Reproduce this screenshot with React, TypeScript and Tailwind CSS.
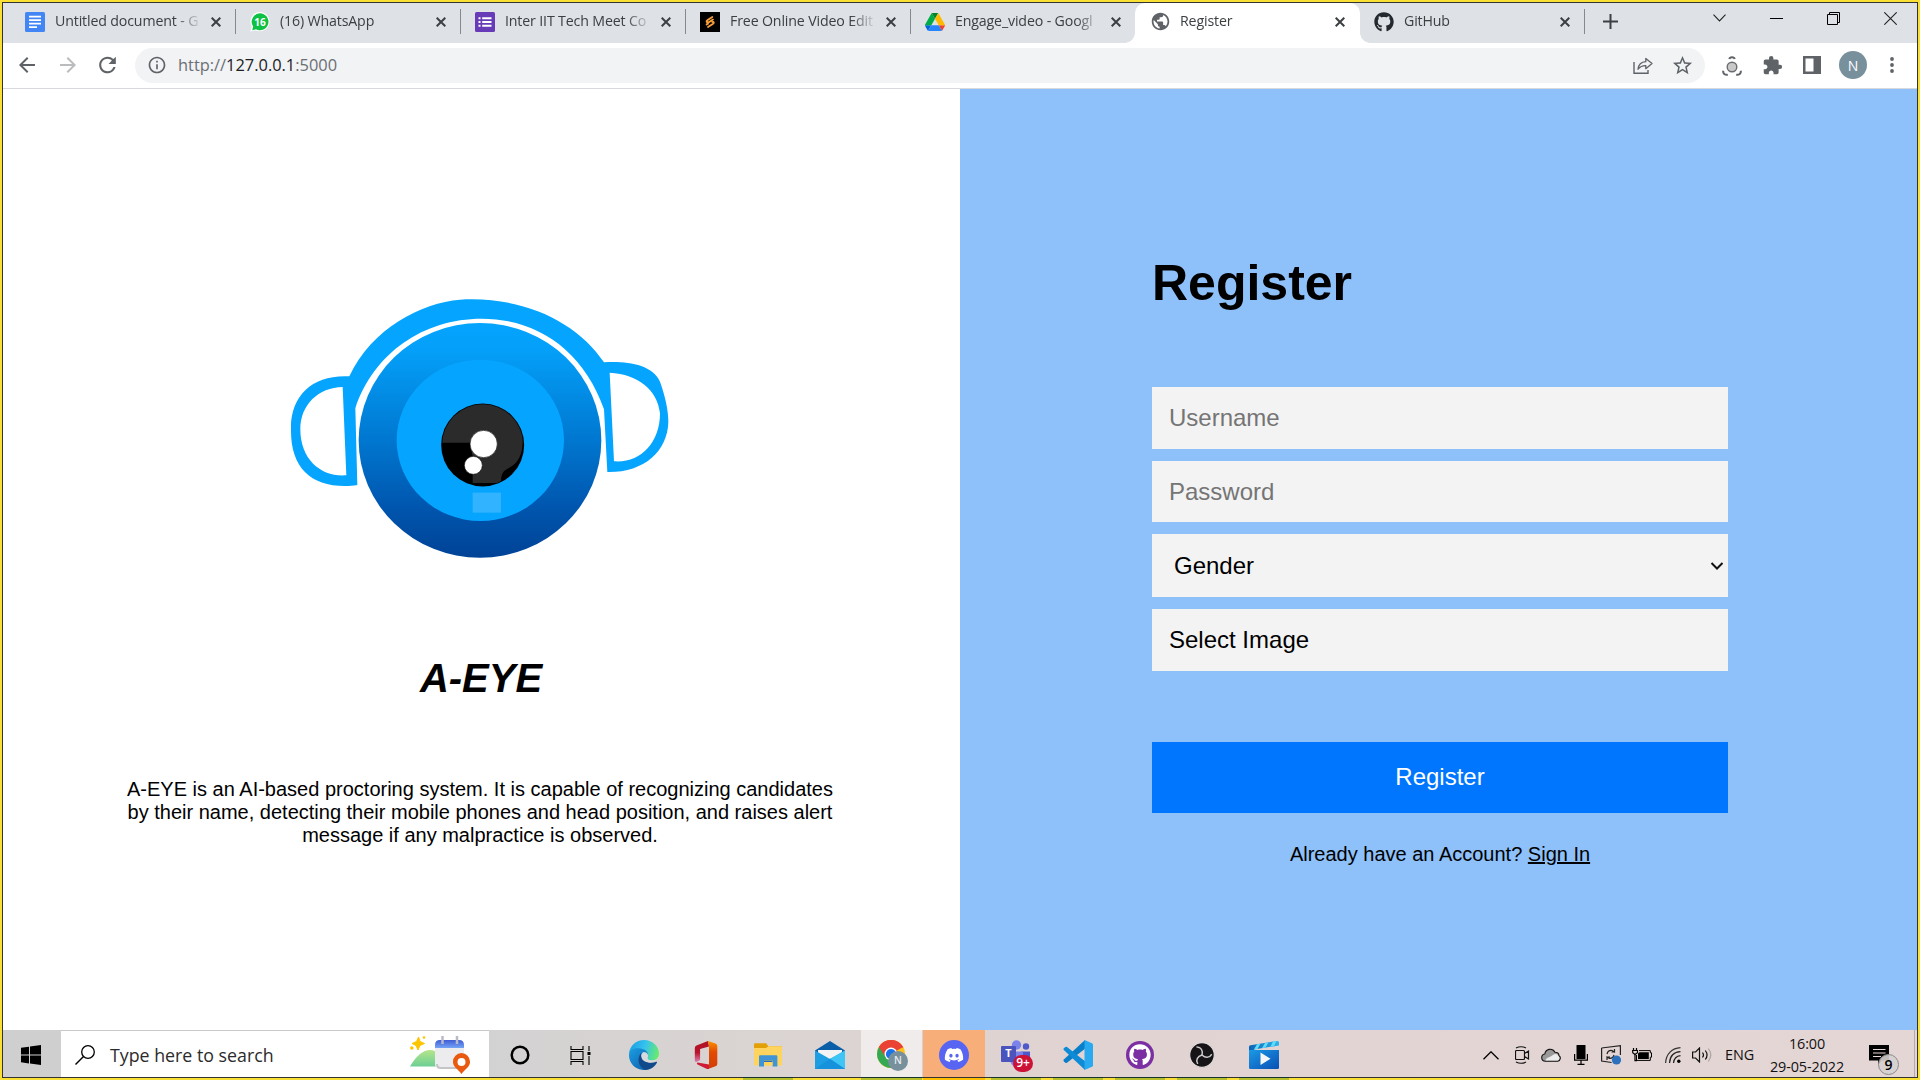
import React from "react";
import type { ReactNode } from "react";
import {
  MdArrowBack,
  MdArrowForward,
  MdRefresh,
  MdInfoOutline,
  MdStarBorder,
  MdExtension,
  MdPublic,
} from "react-icons/md";
import { FaGithub, FaDiscord } from "react-icons/fa";

/* ---------- Tab favicons ---------- */

const DocsIcon = () => (
  <svg viewBox="0 0 20 20" className="size-5">
    <rect width="20" height="20" rx="1.5" fill="#4285f4" />
    <path d="M4 4.700h12M4 8.200h12M4 11.700h12M4 15.200h8" stroke="#fff" strokeWidth="1.700" />
  </svg>
);

const WhatsAppIcon = () => (
  <div className="relative size-5">
    <svg viewBox="0 0 20 20" className="size-5">
      <path d="M10 0a9.600 9.600 0 1 1-4.400 18.200L0.400 19.600 1.800 14.600A9.600 9.600 0 0 1 10 0Z" fill="#fff" />
      <path d="M10 1.300a8.500 8.500 0 1 1-4 16L2.200 18.200 3.200 14.600A8.500 8.500 0 0 1 10 1.300Z" fill="#0cc143" />
    </svg>
    <span className="absolute inset-0 flex items-center justify-center text-[10px] font-bold leading-none text-white">16</span>
  </div>
);

const FormsIcon = () => (
  <svg viewBox="0 0 20 20" className="size-5">
    <rect width="20" height="20" rx="1.5" fill="#673ab7" />
    <path d="M7.200 6.200h9.300M7.200 10h9.300M7.200 13.800h9.300" stroke="#fff" strokeWidth="2" />
    <path d="M3.500 6.200h2M3.500 10h2M3.500 13.800h2" stroke="#fff" strokeWidth="2" />
  </svg>
);

const VideoEditIcon = () => (
  <svg viewBox="0 0 20 20" className="size-5">
    <rect width="20" height="20" fill="#000" />
    <path
      d="M12.300 5 7.300 8.200c-1.300.9-.8 2.600.8 1.900M13 7.600 7.300 11.200M12.300 10c1.600-.7 2 1 .8 1.800L8 15M6.600 12.600l1.400-.9"
      fill="none"
      stroke="#f9a13a"
      strokeWidth="1.800"
      strokeLinecap="round"
    />
  </svg>
);

const DriveIcon = () => (
  <svg viewBox="0 0 87.3 78" className="h-[18px] w-5">
    <path d="m6.6 66.85 3.85 6.65c.8 1.4 1.95 2.5 3.3 3.3l13.75-23.8h-27.5c0 1.55.4 3.1 1.2 4.5z" fill="#0066da" />
    <path d="m43.65 25-13.75-23.8c-1.35.8-2.5 1.9-3.3 3.3l-25.4 44a9.06 9.06 0 0 0 -1.2 4.5h27.5z" fill="#00ac47" />
    <path d="m73.55 76.8c1.35-.8 2.5-1.9 3.3-3.3l1.6-2.75 7.65-13.25c.8-1.4 1.2-2.95 1.2-4.5h-27.5l5.85 11.5z" fill="#ea4335" />
    <path d="m43.65 25 13.75-23.8c-1.35-.8-2.9-1.2-4.5-1.2h-18.5c-1.6 0-3.15.45-4.5 1.2z" fill="#00832d" />
    <path d="m59.8 53h-32.3l-13.75 23.8c1.35.8 2.9 1.2 4.5 1.2h50.8c1.6 0 3.15-.45 4.5-1.2z" fill="#2684fc" />
    <path d="m73.4 26.5-12.7-22c-.8-1.4-1.95-2.5-3.3-3.3l-13.75 23.8 16.15 28h27.45c0-1.55-.4-3.1-1.2-4.5z" fill="#ffba00" />
  </svg>
);

/* ---------- Browser chrome ---------- */

type TabInfo = { title: string; icon: ReactNode; active?: boolean; sep?: boolean };

const tabs: TabInfo[] = [
  { title: "Untitled document - G", icon: <DocsIcon />, sep: true },
  { title: "(16) WhatsApp", icon: <WhatsAppIcon />, sep: true },
  { title: "Inter IIT Tech Meet Co", icon: <FormsIcon />, sep: true },
  { title: "Free Online Video Edit", icon: <VideoEditIcon />, sep: true },
  { title: "Engage_video - Googl", icon: <DriveIcon /> },
  { title: "Register", icon: <MdPublic className="size-[21px] shrink-0 text-[#5f6368]" />, active: true },
  { title: "GitHub", icon: <FaGithub className="size-5 text-[#24292f]" />, sep: true },
];

const CloseX = () => (
  <svg viewBox="0 0 10 10" className="size-[10px] shrink-0">
    <path d="M0.700 0.700 9.300 9.300M9.300 0.700 0.700 9.300" stroke="#3c4043" strokeWidth="2" />
  </svg>
);

function Tab({ title, icon, active, sep }: TabInfo) {
  return (
    <div
      className={
        "relative flex h-10 w-[225px] shrink-0 items-center pb-[3px] pl-[15px] last:w-[224px] last:pl-[14px] " +
        (active ? "rounded-t-[10px] bg-white" : "")
      }
    >
      <div className="flex w-5 shrink-0 items-center justify-center">{icon}</div>
      <div className="ml-[10px] w-[147px] overflow-hidden whitespace-nowrap pb-[2px] text-[14.200px] tracking-[-0.150px] text-[#3c4043] [mask-image:linear-gradient(90deg,#000_82%,transparent_100%)]">
        {title}
      </div>
      <div className={active ? "ml-[8px] flex" : "ml-[9px] flex"}>
        <CloseX />
      </div>
      {sep && <span className="absolute right-[-1px] top-[6px] h-[25px] w-px bg-[#85888c]" />}
      {active && (
        <>
          <span className="absolute bottom-0 left-[-10px] size-[10px] bg-[radial-gradient(circle_at_0_0,transparent_9.5px,#fff_10px)]" />
          <span className="absolute bottom-0 right-[-10px] size-[10px] bg-[radial-gradient(circle_at_100%_0,transparent_9.5px,#fff_10px)]" />
        </>
      )}
    </div>
  );
}

function TabStrip() {
  return (
    <div className="flex h-10 bg-[#dee1e6] pl-[7px]">
      <div className="flex">
        {tabs.map((t) => (
          <Tab key={t.title} {...t} />
        ))}
      </div>
      <svg viewBox="0 0 15 15" className="ml-[19px] mt-[11px] size-[15px]">
        <path d="M7.500 0v15M0 7.500h15" stroke="#3c4043" strokeWidth="2" />
      </svg>
      <div className="ml-auto mr-[20px] mt-[8px] flex h-[14px] items-center gap-[44px]">
        <svg viewBox="0 0 13 8" className="h-2 w-[13px]">
          <path d="M0.500 0.700 6.500 6.900 12.500 0.700" fill="none" stroke="#222" strokeWidth="1.100" />
        </svg>
        <span className="h-px w-[13px] bg-black" />
        <svg viewBox="0 0 13 13" className="size-[13px]">
          <path d="M0.500 2.500h10v10h-10zM2.500 2V0.500h10v10H11" fill="none" stroke="#000" />
        </svg>
        <svg viewBox="0 0 13 13" className="size-[13px]">
          <path d="M0.300 0.300 12.700 12.700M12.700 0.300 0.300 12.700" stroke="#222" strokeWidth="1.100" />
        </svg>
      </div>
    </div>
  );
}

function Toolbar() {
  return (
    <div className="flex h-[46px] items-center border-b border-[#d8d9dc] bg-white pb-px text-[#5f6368]">
      <div className="ml-[12px] flex w-[24px] justify-center">
        <MdArrowBack className="size-6" />
      </div>
      <div className="ml-[17px] flex w-[24px] justify-center text-[#babcbe]">
        <MdArrowForward className="size-6" />
      </div>
      <div className="ml-[15px] flex w-[25px] justify-center">
        <MdRefresh className="size-[26px]" />
      </div>
      <div className="ml-[15px] flex h-[35px] w-[1570px] items-center rounded-full bg-[#f1f3f4] pl-[12px]">
        <MdInfoOutline className="size-5" />
        <div className="ml-[11px] whitespace-nowrap pt-px text-[16.400px] text-[#6b6f74]">
          http://<span className="text-[#202124]">127.0.0.1</span>:5000
        </div>
        <svg viewBox="0 0 20 18" className="ml-auto mt-[2px] h-[18px] w-5">
          <path d="M1 5v11.300h14V13" fill="none" stroke="#5f6368" strokeWidth="1.400" />
          <path d="M5 12.200C5.500 7.600 8 5 12.800 4.700V1.400l6.200 5.200-6.200 5.100V8.600C9.500 8.500 7 9.600 5 12.200Z" fill="none" stroke="#5f6368" strokeWidth="1.300" strokeLinejoin="round" />
        </svg>
        <MdStarBorder className="ml-[18px] mr-[11px] mt-px size-[23px]" />
      </div>
      <svg viewBox="0 0 20 20" className="ml-[17px] mt-px size-5">
        <circle cx="10" cy="11" r="4.800" fill="#c9c9c9" stroke="#6a6c6f" strokeWidth="1.400" />
        <path d="M7.300 3C7.800.6 12.200.6 12.700 3M1.300 14.800c-.6 2.700 1.500 4.400 4.500 4M18.700 14.800c.6 2.700-1.500 4.400-4.500 4" fill="none" stroke="#5f6368" strokeWidth="2" />
      </svg>
      <MdExtension className="ml-[20px] size-[21px]" />
      <svg viewBox="0 0 18 18" className="ml-[20px] size-[18px]">
        <path d="M0 0h18v18H0zM2.500 2.500v13h8v-13z" fill="#5f6368" fillRule="evenodd" />
      </svg>
      <div className="ml-[18px] flex size-7 items-center justify-center rounded-full bg-[#78909c] text-[14px] text-white">N</div>
      <svg viewBox="0 0 4 16" className="ml-[23px] h-4 w-1">
        <circle cx="2" cy="2" r="1.900" fill="#5f6368" />
        <circle cx="2" cy="8" r="1.900" fill="#5f6368" />
        <circle cx="2" cy="14" r="1.900" fill="#5f6368" />
      </svg>
    </div>
  );
}

/* ---------- Page ---------- */

const EyeLogo = () => (
  <svg viewBox="0 0 1260 900" className="h-[300px] w-[420px] shrink-0">
    <defs>
      <linearGradient id="eyeball" x1="0" y1="0" x2="0" y2="1">
        <stop offset="0" stopColor="#05a4ff" />
        <stop offset=".12" stopColor="#049ff8" />
        <stop offset=".5" stopColor="#0077d0" />
        <stop offset=".8" stopColor="#0054ac" />
        <stop offset="1" stopColor="#004397" />
      </linearGradient>
      <clipPath id="pupil">
        <circle cx="638" cy="495" r="122" />
      </clipPath>
    </defs>
    <path
      fill="#05a5ff"
      fillRule="evenodd"
      d="M238 289C305 145 455 68 570 59C760 48 920 125 1002 247C1070 243 1145 252 1170 305C1186 350 1195 390 1195 425C1193 515 1120 578 1012 576L1002 388C940 210 800 116 635 116C460 116 310 220 256 385L262 615C250 617 240 618 225 618C120 618 62 560 63 450C60 345 130 283 238 289ZM218 321C145 322 90 375 91 450C92 540 155 592 229 586ZM1019 278C1105 283 1163 330 1170 400C1170 490 1110 550 1032 544Z"
    />
    <ellipse cx="630" cy="481" rx="364" ry="352" fill="url(#eyeball)" />
    <ellipse cx="631" cy="481" rx="251" ry="242" fill="#05a5ff" />
    <circle cx="638" cy="495" r="124.500" fill="#000" />
    <path
      clipPath="url(#pupil)"
      fill="#2b2b2b"
      d="M514 370H758V488C756 525 745 548 718 563C698 572 693 582 693 609H608V530L600 488H514Z"
    />
    <circle cx="641" cy="492" r="41" fill="#fff" stroke="#111" strokeWidth="2" />
    <circle cx="610" cy="556" r="27" fill="#fff" stroke="#111" strokeWidth="2" />
    <rect x="608" y="638" width="85" height="60" fill="#31b3ff" />
  </svg>
);

const fieldClass =
  "block w-full bg-[#f3f3f3] px-[17px] text-[24px] text-black outline-none placeholder:text-[#757575] placeholder:opacity-100";

function RegisterPage() {
  return (
    <div className="flex h-[941px] font-['Liberation_Sans',Arial,sans-serif] text-black">
      <div className="flex w-[957px] flex-col items-center bg-white pr-[3px] pt-[191px]">
        <EyeLogo />
        <h2 className="mt-[75px] pl-[2px] text-[40px] font-bold italic leading-[46px]">A-EYE</h2>
        <p className="mt-[77px] w-[710px] text-center text-[20px] leading-[23px]">
          A-EYE is an AI-based proctoring system. It is capable of recognizing candidates by their name, detecting
          their mobile phones and head position, and raises alert message if any malpractice is observed.
        </p>
      </div>
      <div className="flex-1 bg-[#8ec0fa] pl-[192px] pt-[165px]">
        <div className="flex w-[576px] flex-col">
          <h1 className="text-[50px] font-bold leading-[58px]">Register</h1>
          <div className="mt-[75px] flex flex-col gap-3">
            <input className={fieldClass + " h-[62px]"} placeholder="Username" />
            <input className={fieldClass + " h-[61px]"} placeholder="Password" />
            <div className="flex h-[63px] items-center justify-between bg-[#f3f3f3] pl-[22px] pr-[4px] text-[24px]">
              Gender
              <svg viewBox="0 0 14 8" className="h-[8px] w-[14px]">
                <path d="M1.500 1 7 6.500 12.500 1" fill="none" stroke="#111" strokeWidth="2" />
              </svg>
            </div>
            <div className="flex h-[62px] items-center bg-[#f3f3f3] px-[17px] text-[24px]">Select Image</div>
          </div>
          <button className="mt-[71px] h-[71px] bg-[#0076ff] pb-px text-[24px] text-white">Register</button>
          <div className="mt-[30px] text-center text-[20px] leading-[23px]">
            Already have an Account? <a className="underline">Sign In</a>
          </div>
        </div>
      </div>
    </div>
  );
}

/* ---------- Taskbar icons ---------- */

const CortanaIcon = () => (
  <svg viewBox="0 0 20 20" className="size-5">
    <circle cx="10" cy="10" r="8.300" fill="none" stroke="#000" strokeWidth="2.500" />
  </svg>
);

const TaskViewIcon = () => (
  <svg viewBox="0 0 21 19" className="mr-[4px] h-[19px] w-[21px]">
    <path d="M1 0v3.500h12V0M1 19v-3.500h12V19M1 5.500h12v8H1zM19 0v5M19 10v9" fill="none" stroke="#000" strokeWidth="1.100" />
    <rect x="17.500" y="6" width="3" height="3" fill="#000" />
  </svg>
);

const EdgeIcon = () => (
  <svg viewBox="0 0 30 30" className="size-[30px]">
    <defs>
      <linearGradient id="edgeTop" x1="0" y1=".3" x2="1" y2=".5">
        <stop offset="0" stopColor="#1a9fe0" />
        <stop offset=".5" stopColor="#35c1f1" />
        <stop offset="1" stopColor="#66eb6e" />
      </linearGradient>
      <linearGradient id="edgeLeft" x1="0" y1="0" x2="1" y2="1">
        <stop offset="0" stopColor="#1b9de2" />
        <stop offset="1" stopColor="#0c59a4" />
      </linearGradient>
    </defs>
    <path d="M0 14C0.500 6 7 0 15 0C24 0 30 6.500 30 13.500C30 18 26.500 20.500 22.500 20.500C19 20.500 17.500 19 18.500 17C20 13 16.500 9.500 11 9C5 8.500 1 12 0 14Z" fill="url(#edgeTop)" />
    <path d="M0 15.500C0 10 5.500 7.500 11 8.500C16 9 19.500 12 19 15C16 11.500 10.500 14 11 19.500C12 26 19 28 25 25C22 29 17 30.500 13 29.800C6 29 0 23 0 15.500Z" fill="url(#edgeLeft)" />
    <path d="M12 13C8 18 8.500 26 16 30C21 30 26 27 28 22.500C28.300 21.500 27.300 21.500 26.500 22C21 24.500 12.500 21 12 13Z" fill="#114a8b" />
    <path d="M14.500 12C11 14 11.500 20 17 22C21 23.200 25 22 27.500 20.300C24 20.600 18.500 21 18.500 17.800C20 15.500 18.500 12 14.500 12Z" fill="#d7dade" />
  </svg>
);

const OfficeIcon = () => (
  <svg viewBox="0 0 24 30" className="h-[30px] w-6">
    <defs>
      <linearGradient id="officeL" x1="0" y1="0" x2="0" y2="1">
        <stop offset="0" stopColor="#ae1323" />
        <stop offset=".55" stopColor="#b9132d" />
        <stop offset="1" stopColor="#dd83b5" />
      </linearGradient>
      <linearGradient id="officeR" x1="0" y1="0" x2="0" y2="1">
        <stop offset="0" stopColor="#fb9100" />
        <stop offset=".4" stopColor="#e34a00" />
        <stop offset="1" stopColor="#d13c08" />
      </linearGradient>
    </defs>
    <path d="M14 1 2.500 5.500Q.8 6.200.8 8v12.500q0 2 1.800 1.500l3.500-2V9L15 6.500Z" fill="url(#officeL)" />
    <path d="M14 1l7.500 2.600Q23.300 4.300 23.300 6v18q0 1.700-1.800 2.300L14 29l1-4V6.500Z" fill="url(#officeR)" />
    <path d="M3.500 22.500 15 24.500V29H13L3.500 24.500Q2 23.300 3.500 22.500Z" fill="#cf1b35" />
  </svg>
);

const ExplorerIcon = () => (
  <svg viewBox="0 0 28 24" className="h-6 w-7">
    <path d="M0 1.500Q0 .3 1.200.3h11l2 3H27q1 0 1 1V22H0z" fill="#e2a006" />
    <path d="M0 5h12l2.500-1.700H27q1 0 1 1V22.500H0z" fill="#ffd45e" />
    <path d="M5 13.500q0-1.200 1.200-1.200h16q1.200 0 1.200 1.200V23.500H18.500V17.500H10V23.500H5z" fill="#3f94d6" />
    <path d="M10 17.500h8.500V22.500H10z" fill="#ffd45e" />
    <path d="M10 17.500h8.500v1.500H10z" fill="#2271b8" />
  </svg>
);

const MailIcon = () => (
  <svg viewBox="0 0 30 28" className="h-7 w-[30px]">
    <path d="M0 9.500 15 0l15 9.500V15H0z" fill="#0a5ea8" />
    <path d="M3 9h24v10H3z" fill="#f3f3f3" />
    <path d="M0 9.500 15 18 30 9.500V28H0z" fill="#1d9de2" />
    <path d="M30 9.500V28L14.500 18z" fill="#3fc5f5" />
    <path d="M0 28 15 17.800 30 28z" fill="#1692dc" />
  </svg>
);

const ChromeIcon = () => (
  <div className="relative ml-[2px] size-[31px]">
    <svg viewBox="0 0 28 28" className="size-7">
      <circle cx="14" cy="14" r="14" fill="#fbc116" />
      <path d="M14 14 1.900 7A14 14 0 0 1 26.100 7Z" fill="#ea4335" />
      <path d="M14 14 1.900 7A14 14 0 0 0 14 28L20 17.500Z" fill="#34a853" />
      <path d="M14 7.500H26.400A14 14 0 0 0 1.900 7L8.500 17Z" fill="#ea4335" />
      <circle cx="14" cy="14" r="6.500" fill="#fff" />
      <circle cx="14" cy="14" r="5.100" fill="#1a73e8" />
    </svg>
    <span className="absolute bottom-0 right-0 flex size-5 items-center justify-center rounded-full bg-[#78909c] text-[10px] font-semibold text-[#e6ebee]">
      N
    </span>
  </div>
);

const DiscordIcon = () => (
  <div className="flex size-[30px] items-center justify-center rounded-full bg-[#5865f2]">
    <FaDiscord className="size-[20px] text-white" />
  </div>
);

const TeamsIcon = () => (
  <div className="relative ml-[2px] h-[31px] w-8">
    <svg viewBox="0 0 32 31" className="h-[31px] w-8">
      <circle cx="15.500" cy="5" r="4.700" fill="#7b83eb" />
      <circle cx="25" cy="6.500" r="3.200" fill="#5059c9" />
      <path d="M20 11.500h9V20h-9z" fill="#5059c9" />
      <path d="M9 11.500h13V22q-1 5-6 5t-7-6z" fill="#7b83eb" />
      <rect y="6" width="15" height="16" rx="1" fill="#4b53bc" />
    </svg>
    <span className="absolute left-0 top-[6px] flex h-4 w-[15px] items-center justify-center text-[11px] font-bold text-white">T</span>
    <span className="absolute right-0 top-[15px] flex h-[17px] w-5 items-center justify-center rounded-full bg-[#cc1237] text-[12px] font-semibold leading-none text-white">
      9+
    </span>
  </div>
);

const VsCodeIcon = () => (
  <svg viewBox="0 0 30 30" className="size-[30px]">
    <path d="M22 0 0.800 19.500Q0 20.500.8 21.300l1.600 1.500q.8.500 1.600 0L22 8.800Z" fill="#0a7fc9" />
    <path d="M22 30 .8 10Q0 9 .8 8.200L2.400 7q.8-.5 1.600 0L22 21.200Z" fill="#0d8bd6" />
    <path d="M21.500 0 29 3.300q1 .5 1 1.600V25.200q0 1-1 1.500L21.500 30z" fill="#29a9f0" />
  </svg>
);

const GitHubDesktopIcon = () => (
  <div className="flex size-7 items-center justify-center rounded-full bg-[#7b2fa3]">
    <FaGithub className="size-[22px] text-white" />
  </div>
);

const ObsIcon = () => (
  <svg viewBox="0 0 26 26" className="size-[26px]">
    <circle cx="13" cy="13" r="12.300" fill="#161416" stroke="#dedada" strokeWidth="1.200" />
    <g fill="none" stroke="#c9c7c9" strokeWidth="1.500" strokeLinecap="round">
      <path d="M13 13C14.200 8.500 12 5 8 5" />
      <path d="M13 13C14.200 8.500 12 5 8 5" transform="rotate(120 13 13)" />
      <path d="M13 13C14.200 8.500 12 5 8 5" transform="rotate(240 13 13)" />
    </g>
  </svg>
);

const MoviesIcon = () => (
  <svg viewBox="0 0 30 30" className="size-[30px]">
    <defs>
      <linearGradient id="board" x1="0" y1="0" x2="1" y2="1">
        <stop offset="0" stopColor="#1b9ae6" />
        <stop offset="1" stopColor="#0a4fb4" />
      </linearGradient>
      <linearGradient id="clap" x1="0" y1="0" x2="1" y2="0">
        <stop offset="0" stopColor="#0a62b5" />
        <stop offset="1" stopColor="#2eb5ee" />
      </linearGradient>
    </defs>
    <path d="M0 13V7q0-1.500 1.500-1.800L28 1q2-.3 2 1.500V5.500L5 9.500V13Z" fill="url(#clap)" />
    <path d="M8 4.200l3.500-.5L8.500 9 5 9.500ZM16 2.900l3.500-.5L16.500 7.600 13 8.200ZM24 1.600l3.500-.5L25 6.300l-3.500.5Z" fill="#5fdcfb" />
    <path d="M0 10h30v17.500q0 1.500-1.500 1.500H1.500Q0 29 0 27.500Z" fill="url(#board)" />
    <path d="M11.500 12.500 21.500 18.700 11.500 25Z" fill="#f6f6f6" />
  </svg>
);

const WindowsIcon = () => (
  <svg viewBox="0 0 20 20" className="size-5">
    <path d="M0 2.800 8 1.700V9.600H0zM9 1.500 20 0V9.600H9zM0 10.500H8V18.400L0 17.300zM9 10.500H20V20L9 18.500z" fill="#000" />
  </svg>
);

const SearchArt = () => (
  <svg viewBox="0 0 60 38" className="h-[38px] w-[60px]">
    <defs>
      <linearGradient id="calTop" x1="0" y1="0" x2="0" y2="1">
        <stop offset="0" stopColor="#3f5bd6" />
        <stop offset="1" stopColor="#75a5f5" />
      </linearGradient>
      <linearGradient id="hill" x1="0" y1="0" x2="0" y2="1">
        <stop offset="0" stopColor="#b4e68a" />
        <stop offset="1" stopColor="#6ccf95" />
      </linearGradient>
    </defs>
    <path d="M8.500 1 10 5.500 14.500 7.500 10 9.500 8 14 6 9.500 2 7.500 6.500 5.500Z" fill="#fdc500" stroke="#fdc500" strokeLinejoin="round" />
    <circle cx="1.800" cy="12" r="1.800" fill="#fdc500" />
    <circle cx="14" cy="1.500" r="1.300" fill="#fdc500" />
    <path d="M0 30.500C6 20 13 14 20 14q6 0 9 5V30.500Z" fill="url(#hill)" />
    <path d="M25 10h29v18q0 5-5 5H30q-5 0-5-5Z" fill="#ececee" />
    <path d="M27 28q0 4 4 4h20" fill="none" stroke="#c5c5c8" strokeWidth="2" />
    <path d="M25 12V9q0-5 5-5h19q5 0 5 5v3Z" fill="url(#calTop)" />
    <path d="M32.500 0v8M47 0v8" stroke="#b8bcc8" strokeWidth="2.500" />
    <path d="M51.500 17a8.800 8.800 0 0 1 8.500 9c0 5-5 7-8.500 12-3.500-5-8.500-7-8.500-12a8.800 8.800 0 0 1 8.500-9Z" fill="#e9590f" />
    <circle cx="51.500" cy="26" r="4" fill="#fff" />
  </svg>
);

type TaskApp = { name: string; icon: ReactNode; bg?: string; running?: boolean; wide?: boolean };

const apps: TaskApp[] = [
  { name: "cortana", icon: <CortanaIcon /> },
  { name: "taskview", icon: <TaskViewIcon /> },
  { name: "edge", icon: <EdgeIcon /> },
  { name: "office", icon: <OfficeIcon /> },
  { name: "explorer", icon: <ExplorerIcon />, running: true },
  { name: "mail", icon: <MailIcon /> },
  { name: "chrome", icon: <ChromeIcon />, bg: "bg-[#f0eceb] border-r border-[#d5cfce]", running: true, wide: true },
  { name: "discord", icon: <DiscordIcon />, bg: "bg-[#f8ae79]" },
  { name: "teams", icon: <TeamsIcon />, running: true },
  { name: "vscode", icon: <VsCodeIcon />, running: true },
  { name: "github", icon: <GitHubDesktopIcon />, running: true },
  { name: "obs", icon: <ObsIcon />, running: true },
  { name: "movies", icon: <MoviesIcon />, running: true },
];

function Tray() {
  return (
    <div className="ml-auto flex items-center pt-[3px]">
      <svg viewBox="0 0 16 9" className="h-[9px] w-4">
        <path d="M.5 8.300 8 .8 15.500 8.300" fill="none" stroke="#000" strokeWidth="1.300" />
      </svg>
      <svg viewBox="0 0 15 18" className="ml-[16px] h-[18px] w-[15px]">
        <path d="M1.500 4.500h7q1 0 1 1v7q0 1-1 1h-7q-1 0-1-1v-7q0-1 1-1ZM9.500 7.500l4-2.500v8l-4-2.500M1 2q5-2.500 10 0M1 16q5 2.500 10 0" fill="none" stroke="#111" strokeWidth="1.200" />
      </svg>
      <svg viewBox="0 0 20 14" className="ml-[11px] h-[14px] w-5">
        <path d="M4.500 13.200C-.5 13-.3 6.500 3.800 6 4.500 1 11 -.8 14 4.200c3.500 0 4 2 4 3.500 2 1 1.800 5-1.300 5.500Z" fill="#9a9a9a" stroke="#111" strokeWidth="1.100" />
        <path d="M4.500 12.600C5 9.500 9 9.500 12 7c2-2 5-1 5.300 1 1.700 1 1.500 4-.8 4.600Z" fill="#ececec" />
      </svg>
      <svg viewBox="0 0 14 20" className="ml-[13px] h-5 w-[14px]">
        <rect x="2.500" y="0" width="9" height="14" rx=".5" fill="#000" />
        <path d="M.6 9v6.200h12.800V9M7 15.500V19M3.500 19.300h7" fill="none" stroke="#000" strokeWidth="1.200" />
      </svg>
      <svg viewBox="0 0 21 20" className="ml-[13px] h-5 w-[21px]">
        <path d="M.6 3 19.400.7V10M.6 3v13l10 1.500" fill="none" stroke="#222" strokeWidth="1.200" />
        <path d="M6 9q1-4 5-3.500l2.500 1.500V4M13.500 7H10.500M13 10q-1 3.500-4.500 3.300L6 12v3M6 12h3" fill="none" stroke="#222" strokeWidth="1.200" />
        <circle cx="15.500" cy="15" r="4.600" fill="#2b71bd" />
      </svg>
      <svg viewBox="0 0 20 14" className="ml-[10px] h-[14px] w-5">
        <path d="M1.500 0v2.500M4.500 0v2.500M0 2.800h6M3 5v7.600H5" fill="none" stroke="#000" strokeWidth="1.200" />
        <path d="M.7 2.500h4.800v2.200L3 6.500.7 4.700z" fill="#e2d4d3" stroke="#000" strokeWidth="1.100" />
        <path d="M7 2.600h11.300v2.200h1.200v4.400h-1.200v3.200H4.500V7" fill="none" stroke="#000" strokeWidth="1" />
        <path d="M6 5.500l1.500-1.200h9.300v6.600H6z" fill="#000" />
      </svg>
      <svg viewBox="0 0 16 16" className="ml-[13px] size-4">
        <path d="M.6 16C1 7 7 1 15.500.6" fill="none" stroke="#333" strokeWidth="1.200" />
        <path d="M4.500 16C5 9 9 5 15.500 4.700M8.500 16c.5-4 3-7 7-7.300" fill="none" stroke="#222" strokeWidth="1.200" />
        <circle cx="13.800" cy="14.300" r="1.700" fill="#000" />
      </svg>
      <svg viewBox="0 0 20 16" className="ml-[11px] h-4 w-5">
        <path d="M.6 5h3L7.500 1v14l-3.900-4h-3Z" fill="none" stroke="#111" strokeWidth="1.200" />
        <path d="M10.500 5.500q2 2.500 0 5M13.300 3.500q3.500 4.500 0 9" fill="none" stroke="#111" strokeWidth="1.200" />
        <path d="M16.300 1.500q5 6.500 0 13" fill="none" stroke="#aaa3a3" strokeWidth="1.200" />
      </svg>
      <span className="ml-[13px] w-[30px] whitespace-nowrap text-[14.400px] tracking-[-0.100px] text-[#111]">ENG</span>
      <div className="ml-[13px] flex w-[78px] flex-col items-center whitespace-nowrap pb-px text-[14.400px] leading-[23px] tracking-[-0.100px] text-[#111]">
        <span>16:00</span>
        <span>29-05-2022</span>
      </div>
      <div className="relative ml-[23px] h-[20px] w-[45px]">
        <svg viewBox="0 0 20 20" className="size-5">
          <path d="M0 0h20v15.500H13L9 20V15.500H0Z" fill="#000" />
          <path d="M4 4.500h12.500M4 8h12.500M4 11.500h8" stroke="#e5d7d6" strokeWidth="1.100" />
        </svg>
        <span className="absolute left-[9px] top-[9px] flex size-[21px] items-center justify-center rounded-full border border-[#8c8a8a] bg-[#d5d0d0]/90 text-[14px] font-semibold leading-none text-black">
          9
        </span>
      </div>
      <span className="-mt-[3px] mr-[2px] h-[47px] w-px bg-[#b5a9a9]" />
    </div>
  );
}

function Taskbar() {
  return (
    <div className="flex h-[47px] bg-[linear-gradient(90deg,#cfcfcf_0%,#d3d2d2_25%,#dbd4d2_42%,#e0d3d2_55%,#e4d6d5_100%)] text-black">
      <div className="flex w-[58px] items-center justify-center pr-[3px] pt-[3px]">
        <WindowsIcon />
      </div>
      <div className="flex w-[428px] items-center border-t border-[#c8c8c8] bg-white pl-[14px] pr-[19px] pt-px">
        <svg viewBox="0 0 20 20" className="size-5">
          <circle cx="13" cy="7" r="6.300" fill="none" stroke="#000" strokeWidth="1.300" />
          <path d="M8.500 11.500.5 19.500" stroke="#000" strokeWidth="1.400" />
        </svg>
        <span className="ml-[15px] whitespace-nowrap pt-px text-[17.800px] text-[#2b2b2b]">Type here to search</span>
        <div className="ml-auto">
          <SearchArt />
        </div>
      </div>
      <div className="flex">
        {apps.map((a) => (
          <div key={a.name} className={"relative flex w-[62px] items-center justify-center pt-[3px] " + (a.bg ?? "")}>
            {a.icon}
            {a.running && (
              <span
                className={
                  "absolute bottom-[-3px] h-[3px] border-t border-[#16332f] bg-[#b7bf2c] " +
                  (a.wide ? "inset-x-0" : "inset-x-[6px]")
                }
              />
            )}
            {a.name === "discord" && <span className="absolute inset-x-0 bottom-[-3px] h-[2px] bg-[#ffbd00]" />}
          </div>
        ))}
      </div>
      <Tray />
    </div>
  );
}

export default function App() {
  return (
    <div className="h-[1080px] w-[1920px] border-2 border-[#fadf35] font-['Open_Sans','Noto_Sans',sans-serif]">
      <div className="h-[1076px] w-[1916px] border border-[#33332f]">
        <TabStrip />
        <Toolbar />
        <RegisterPage />
        <Taskbar />
      </div>
    </div>
  );
}
